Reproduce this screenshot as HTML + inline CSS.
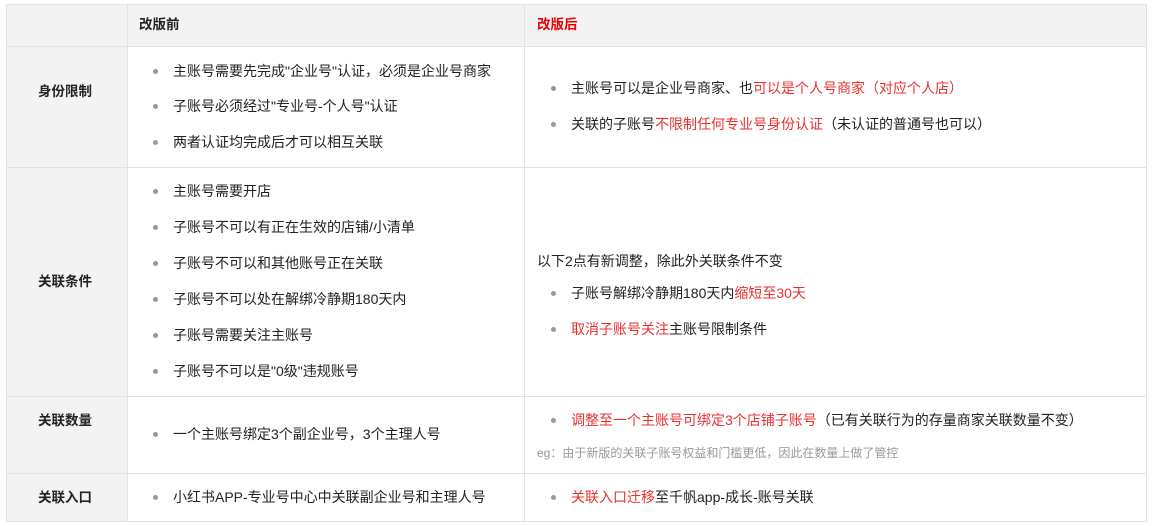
<!DOCTYPE html>
<html><head><meta charset="utf-8"><style>
body{margin:0;width:1152px;height:526px;background:#fff;font-family:"Liberation Sans","Noto Sans CJK SC",sans-serif;font-size:14px;color:#222;position:relative;overflow:hidden}
.c{position:absolute;box-sizing:border-box;border:1px solid #e2e2e2}
.g{background:#f3f3f3}
.t{position:absolute;white-space:nowrap;line-height:16px}
.b{font-weight:bold;font-size:13.5px}
.li{position:absolute;white-space:nowrap;line-height:16px}
.li:before{content:"";position:absolute;left:-20px;top:6px;width:5px;height:5px;border-radius:50%;background:#999}
.r{color:#e8312f}
.s{color:#999;font-size:12px}
</style></head><body>
<div class="c g" style="left:6px;top:4px;width:122px;height:43px"></div>
<div class="c g" style="left:127px;top:4px;width:398px;height:43px"></div>
<div class="c g" style="left:524px;top:4px;width:623px;height:43px"></div>
<div class="c g" style="left:6px;top:46px;width:122px;height:122px"></div>
<div class="c" style="left:127px;top:46px;width:398px;height:122px"></div>
<div class="c" style="left:524px;top:46px;width:623px;height:122px"></div>
<div class="c g" style="left:6px;top:167px;width:122px;height:230px"></div>
<div class="c" style="left:127px;top:167px;width:398px;height:230px"></div>
<div class="c" style="left:524px;top:167px;width:623px;height:230px"></div>
<div class="c g" style="left:6px;top:396px;width:122px;height:78px"></div>
<div class="c" style="left:127px;top:396px;width:398px;height:78px"></div>
<div class="c" style="left:524px;top:396px;width:623px;height:78px"></div>
<div class="c g" style="left:6px;top:473px;width:122px;height:49px"></div>
<div class="c" style="left:127px;top:473px;width:398px;height:49px"></div>
<div class="c" style="left:524px;top:473px;width:623px;height:49px"></div>

<div class="t b" style="left:139px;top:17px">改版前</div>
<div class="t b" style="left:537px;top:17px;color:#e00">改版后</div>

<div class="t b" style="left:38px;top:84px">身份限制</div>
<div class="li" style="left:173px;top:63px">主账号需要先完成"企业号"认证，必须是企业号商家</div>
<div class="li" style="left:173px;top:98px">子账号必须经过"专业号-个人号"认证</div>
<div class="li" style="left:173px;top:134px">两者认证均完成后才可以相互关联</div>
<div class="li" style="left:571px;top:80px">主账号可以是企业号商家、也<span class="r">可以是个人号商家（对应个人店）</span></div>
<div class="li" style="left:571px;top:116px">关联的子账号<span class="r">不限制任何专业号身份认证</span>（未认证的普通号也可以）</div>

<div class="t b" style="left:38px;top:274px">关联条件</div>
<div class="li" style="left:173px;top:183px">主账号需要开店</div>
<div class="li" style="left:173px;top:219px">子账号不可以有正在生效的店铺/小清单</div>
<div class="li" style="left:173px;top:255px">子账号不可以和其他账号正在关联</div>
<div class="li" style="left:173px;top:291px">子账号不可以处在解绑冷静期180天内</div>
<div class="li" style="left:173px;top:327px">子账号需要关注主账号</div>
<div class="li" style="left:173px;top:363px">子账号不可以是"0级"违规账号</div>
<div class="t" style="left:537px;top:253px">以下2点有新调整，除此外关联条件不变</div>
<div class="li" style="left:571px;top:285px">子账号解绑冷静期180天内<span class="r">缩短至30天</span></div>
<div class="li" style="left:571px;top:321px"><span class="r">取消子账号关注</span>主账号限制条件</div>

<div class="t b" style="left:38px;top:413px">关联数量</div>
<div class="li" style="left:173px;top:426px">一个主账号绑定3个副企业号，3个主理人号</div>
<div class="li" style="left:571px;top:412px"><span class="r">调整至一个主账号可绑定3个店铺子账号</span>（已有关联行为的存量商家关联数量不变）</div>
<div class="t s" style="left:537px;top:445px">eg：由于新版的关联子账号权益和门槛更低，因此在数量上做了管控</div>

<div class="t b" style="left:38px;top:490px">关联入口</div>
<div class="li" style="left:173px;top:489px">小红书APP-专业号中心中关联副企业号和主理人号</div>
<div class="li" style="left:571px;top:489px"><span class="r">关联入口迁移</span>至千帆app-成长-账号关联</div>
</body></html>
